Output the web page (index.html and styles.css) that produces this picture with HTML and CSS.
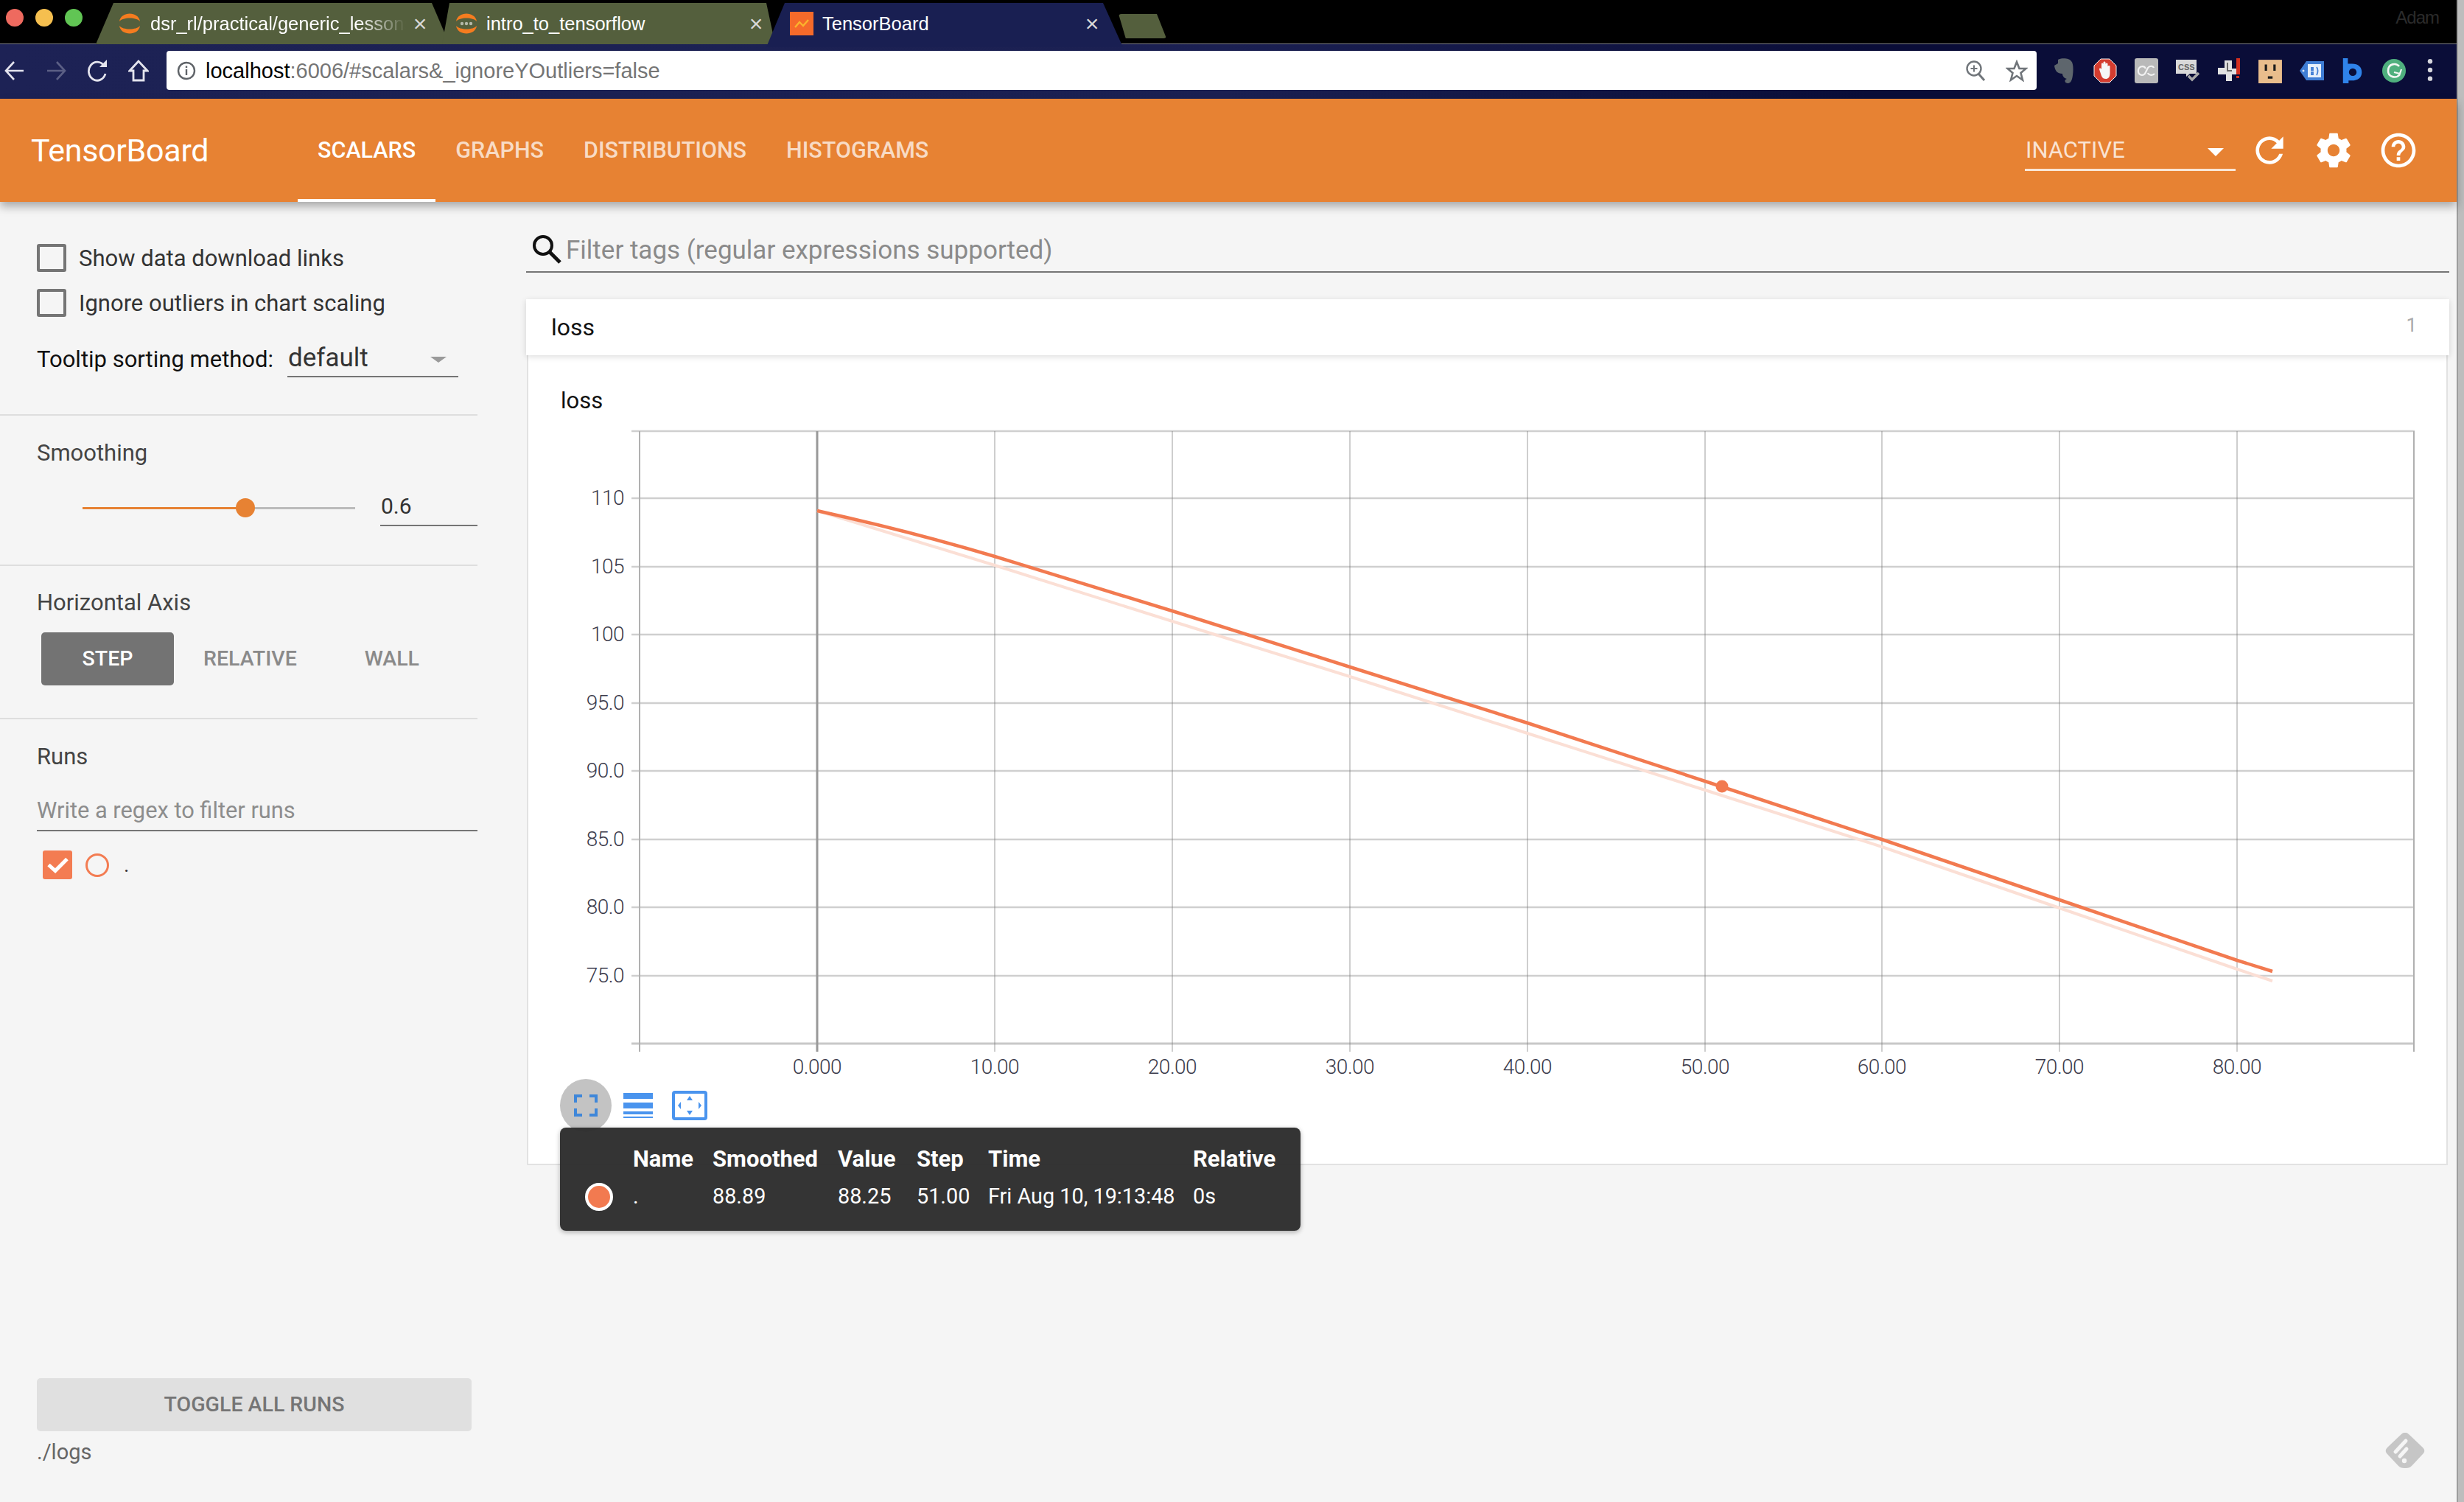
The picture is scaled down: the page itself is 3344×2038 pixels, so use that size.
FILE: index.html
```html
<!DOCTYPE html>
<html lang="en">
<head>
<meta charset="utf-8">
<title>TensorBoard</title>
<link rel="stylesheet" href="styles.css">
</head>
<body>
<div class="window">
  <div class="tabstrip">
    <div class="lights"><i class="light red"></i><i class="light yellow"></i><i class="light green"></i></div>
    <div class="tab tab-one">
      <svg class="favicon" viewBox="0 0 30 30"><path d="M1 12C3 -2 27 -2 29 12C24 6 6 6 1 12Z" fill="#f57c1f"/><path d="M1 18C3 32 27 32 29 18C24 24 6 24 1 18Z" fill="#f57c1f"/></svg>
      <span class="tab-title fade">dsr_rl/practical/generic_lessons</span>
      <span class="tab-close">×</span>
    </div>
    <div class="tab tab-two">
      <svg class="favicon" viewBox="0 0 30 30"><path d="M1 12C3 -2 27 -2 29 12C24 6 6 6 1 12Z" fill="#f57c1f"/><path d="M1 18C3 32 27 32 29 18C24 24 6 24 1 18Z" fill="#f57c1f"/><circle cx="9" cy="15" r="2.200" fill="#b4b8a8"/><circle cx="15" cy="15" r="2.200" fill="#b4b8a8"/><circle cx="21" cy="15" r="2.200" fill="#b4b8a8"/></svg>
      <span class="tab-title">intro_to_tensorflow</span>
      <span class="tab-close">×</span>
    </div>
    <div class="tab tab-three">
      <svg class="favicon" viewBox="0 0 32 32"><rect width="32" height="32" fill="#f56a2a"/><path d="M7 21L13 14L18 19L25 11" fill="none" stroke="#fbb32c" stroke-width="2.400"/></svg>
      <span class="tab-title">TensorBoard</span>
      <span class="tab-close">×</span>
    </div>
    <div class="newtab"></div>
    <span class="user">Adam</span>
  </div>

  <div class="toolbar">
    <div class="navs">
      <svg class="nav" viewBox="0 0 28 32"><path d="M26 16H3M13 4L2 16L13 28" fill="none" stroke="#e4e4ee" stroke-width="2.600"/></svg>
      <svg class="nav" viewBox="0 0 28 32"><path d="M2 16H25M15 4L26 16L15 28" fill="none" stroke="#5b5f85" stroke-width="2.600"/></svg>
      <svg class="nav" viewBox="0 0 28 32"><path d="M23 9A11.500 12.500 0 1 0 25 20" fill="none" stroke="#e4e4ee" stroke-width="2.800"/><path d="M17 11H27V1Z" fill="#e4e4ee"/></svg>
      <svg class="nav" viewBox="0 0 28 32"><path d="M14 3L2 16H7V29H21V16H26Z" fill="none" stroke="#e4e4ee" stroke-width="2.800"/></svg>
    </div>
    <div class="omnibox">
      <svg class="info" viewBox="0 0 26 26"><circle cx="13" cy="13" r="11" fill="none" stroke="#5f6368" stroke-width="2.400"/><path d="M11.800 11h2.400v8h-2.400zM11.800 6.500h2.400v2.400h-2.400z" fill="#5f6368"/></svg>
      <span class="url"><span class="host">localhost</span>:6006/#scalars&amp;_ignoreYOutliers=false</span>
      <svg class="omni-icon" viewBox="0 0 28 30"><circle cx="12" cy="12" r="9.500" fill="none" stroke="#70757a" stroke-width="2.400"/><path d="M18 19L26 28" stroke="#70757a" stroke-width="3"/><path d="M12 7.500V16.500M7.500 12H16.500" stroke="#70757a" stroke-width="2"/></svg>
      <svg class="omni-icon star" viewBox="0 0 30 30"><path d="M15 3L18.500 12H27.500L20.500 18L23 27.500L15 22L7 27.500L9.500 18L2.500 12H11.500Z" fill="none" stroke="#70757a" stroke-width="2.600"/></svg>
    </div>
    <div class="extensions">
      <span class="ext"><svg viewBox="0 0 32 34"><path d="M8 2C13 -1 24 0 26 4C29 7 29 16 28 23C27 32 24 34 21 34C17 34 16 29 20 28C16 27 14 24 14 21C8 21 4 18 3 10L8 7Z" fill="#5e666d"/></svg></span>
      <span class="ext"><svg viewBox="0 0 32 34"><path d="M10 1H22L31 10V24L22 33H10L1 24V10Z" fill="#d43c2f" stroke="#f4f4f4" stroke-width="1"/><path d="M11 24L8 15C8 13 10 13 11 15V8C11 6 13 6 13.500 8V6C13.500 4 16.500 4 16.500 6V8C17 6 19.500 6 19.500 8V11C20 9.500 22.500 9.500 22.500 11V20C22.500 26 20 28 17 28C14 28 12.500 27 11 24Z" fill="#f6f6f6"/></svg></span>
      <span class="ext"><svg viewBox="0 0 32 34"><rect width="32" height="34" rx="3" fill="#b9b9b9"/><path d="M15 14C13 10 6 10 5 16C4 22 10 25 14 21C15 19 17 15 18 13C20 10 25 10 26 13M27 21C24 24 19 23 18 20" fill="none" stroke="#f2f2f2" stroke-width="2.200"/></svg></span>
      <span class="ext"><svg viewBox="0 0 32 34"><path d="M0 2H28V21H19L14 25V21H0Z" fill="#d9d9d9"/><text x="3" y="16" class="ext-css">CSS</text><path d="M17 24L22 29L31 20" fill="none" stroke="#a8a8a8" stroke-width="3.500"/></svg></span>
      <span class="ext"><svg viewBox="0 0 32 34"><path d="M10 3H20V14H28V22H20V31H12V22H1V13H10Z" fill="#e2e2e2"/><path d="M14 6V17H20" fill="none" stroke="#666" stroke-width="2"/><path d="M26 0H31V22H26ZM26 24H30V27H26Z" fill="#d32f20"/></svg></span>
      <span class="ext"><svg viewBox="0 0 30 32"><rect y="2" width="30" height="30" fill="#e9bd8c"/><path d="M8 8H11V16H8ZM19 8H22V16H19ZM12 23H18V26H12Z" fill="#1c1c1c"/></svg></span>
      <span class="ext"><svg viewBox="0 0 34 28"><path d="M10 1H34V27H10L1 14Z" fill="#3f7dd4"/><rect x="12" y="5" width="18" height="18" fill="#e6effa"/><path d="M17 10H19V13H17ZM17 16H19V19H17ZM24 9C26 12 26 16 24 20" fill="none" stroke="#3f7dd4" stroke-width="1.800"/><circle cx="6" cy="14" r="1.500" fill="#d9e6f7"/></svg></span>
      <span class="ext"><svg viewBox="0 0 28 36"><path d="M0 0H7V8H13C22 8 27 13 27 20C27 28 21 32 13 32H8V36H0Z" fill="#2f83ea"/><circle cx="14" cy="20" r="5.500" fill="#0a0d38"/></svg></span>
      <span class="ext"><svg viewBox="0 0 34 34"><circle cx="17" cy="17" r="16" fill="#4fb07e"/><path d="M24 11C20 6 9 7 9 17C9 26 20 28 25 22" fill="none" stroke="#f2f7f4" stroke-width="2.600"/><path d="M17 19L25 21L27 15" fill="none" stroke="#f2f7f4" stroke-width="2.200"/></svg></span>
      <span class="ext ext-dots"><svg viewBox="0 0 8 32"><circle cx="4" cy="4" r="3" fill="#d5d5dc"/><circle cx="4" cy="15" r="3" fill="#d5d5dc"/><circle cx="4" cy="26" r="3" fill="#d5d5dc"/></svg></span>
    </div>
  </div>

  <header class="appbar">
    <div class="brand">TensorBoard</div>
    <nav class="apptabs">
      <span class="apptab active">SCALARS</span>
      <span class="apptab">GRAPHS</span>
      <span class="apptab">DISTRIBUTIONS</span>
      <span class="apptab">HISTOGRAMS</span>
    </nav>
    <div class="appactions">
      <div class="inactive"><span>INACTIVE</span><i class="inactive-arrow"></i></div>
      <svg class="act act-refresh" viewBox="0 0 24 24"><path d="M17.650 6.350C16.200 4.900 14.210 4 12 4c-4.420 0-7.990 3.580-7.990 8s3.570 8 7.990 8c3.730 0 6.840-2.550 7.730-6h-2.080c-.820 2.330-3.040 4-5.650 4-3.310 0-6-2.690-6-6s2.690-6 6-6c1.660 0 3.140.690 4.220 1.780L13 11h7V4l-2.350 2.350z"/></svg>
      <svg class="act" viewBox="0 0 24 24"><path d="M19.430 12.980c.040-.320.070-.640.070-.980s-.030-.660-.070-.980l2.110-1.650c.190-.150.240-.420.120-.640l-2-3.460c-.120-.220-.390-.300-.610-.220l-2.490 1c-.520-.400-1.080-.730-1.690-.980l-.380-2.650C14.460 2.180 14.250 2 14 2h-4c-.250 0-.460.180-.490.420l-.380 2.650c-.610.250-1.170.590-1.690.980l-2.490-1c-.230-.090-.490 0-.610.220l-2 3.460c-.130.220-.070.490.120.640l2.110 1.650c-.040.320-.070.650-.070.980s.030.660.070.980l-2.110 1.650c-.190.150-.240.420-.120.640l2 3.460c.120.220.390.300.610.220l2.490-1c.520.400 1.080.730 1.690.980l.380 2.650c.030.240.240.420.490.420h4c.250 0 .460-.180.490-.420l.380-2.650c.610-.250 1.170-.590 1.690-.980l2.490 1c.230.090.490 0 .610-.220l2-3.460c.120-.220.070-.490-.120-.640l-2.110-1.650zM12 15.500c-1.930 0-3.500-1.570-3.500-3.500s1.570-3.500 3.500-3.500 3.500 1.570 3.500 3.500-1.570 3.500-3.500 3.500z"/></svg>
      <svg class="act" viewBox="0 0 24 24"><path d="M11 18h2v-2h-2v2zm1-16C6.480 2 2 6.480 2 12s4.480 10 10 10 10-4.480 10-10S17.520 2 12 2zm0 18c-4.410 0-8-3.590-8-8s3.590-8 8-8 8 3.590 8 8-3.590 8-8 8zm0-14c-2.210 0-4 1.790-4 4h2c0-1.100.900-2 2-2s2 .900 2 2c0 2-3 1.750-3 5h2c0-2.250 3-2.500 3-5 0-2.210-1.790-4-4-4z"/></svg>
    </div>
  </header>

  <div class="app">
    <aside class="sidebar">
      <section class="side-section options">
        <label class="check-row"><i class="checkbox"></i><span>Show data download links</span></label>
        <label class="check-row second"><i class="checkbox"></i><span>Ignore outliers in chart scaling</span></label>
        <div class="sort-row">
          <span class="sort-label">Tooltip sorting method:</span>
          <div class="sort-select"><span>default</span><i class="sort-arrow"></i></div>
        </div>
      </section>
      <section class="side-section smoothing">
        <div class="side-title">Smoothing</div>
        <div class="slider-row">
          <div class="slider"><div class="slider-fill"></div><div class="slider-knob"></div></div>
          <div class="slider-value">0.6</div>
        </div>
      </section>
      <section class="side-section axis">
        <div class="side-title">Horizontal Axis</div>
        <div class="axis-buttons">
          <span class="axis-btn selected">STEP</span>
          <span class="axis-btn relative-btn">RELATIVE</span>
          <span class="axis-btn wall-btn">WALL</span>
        </div>
      </section>
      <section class="side-section runs">
        <div class="side-title">Runs</div>
        <div class="run-filter">Write a regex to filter runs</div>
        <div class="run-row">
          <i class="run-check"><svg viewBox="0 0 40 38"><path d="M8 19L17 27L33 11" fill="none" stroke="#fff" stroke-width="5"/></svg></i>
          <i class="run-circle"></i>
          <span class="run-name">.</span>
        </div>
      </section>
      <div class="side-footer">
        <div class="toggle-btn">TOGGLE ALL RUNS</div>
        <div class="logdir">./logs</div>
      </div>
    </aside>

    <main class="main">
      <div class="tag-filter">
        <svg class="search" viewBox="0 0 42 42"><circle cx="16" cy="16" r="12" fill="none" stroke="#111" stroke-width="4"/><path d="M25 25L39 39" stroke="#111" stroke-width="5"/></svg>
        <span class="tag-text">Filter tags (regular expressions supported)</span>
      </div>
      <div class="card-head"><span class="card-name">loss</span><span class="card-count">1</span></div>
      <div class="card-body">
        <div class="chart-title">loss</div>
        <svg class="chart" viewBox="717 570 2605 900" width="2605" height="900">
          <g class="grid-h">
            <path d="M857 585H3277M857 676H3277M857 769H3277M857 861H3277M857 954H3277M857 1046H3277M857 1139H3277M857 1231H3277M857 1324H3277"/>
          </g>
          <path class="axis-x" d="M857 1416H3277"/>
          <g class="grid-v">
            <path d="M1350 585V1427M1591 585V1427M1832 585V1427M2073 585V1427M2314 585V1427M2554 585V1427M2795 585V1427M3036 585V1427"/>
          </g>
          <path class="axis-side" d="M868 585V1427M3276 585V1427"/>
          <path class="axis-zero" d="M1109 585V1427"/>
          <path class="line-raw" d="M1109 693L1350 767L1591 843L1832 918L2073 995L2314 1072L2554 1149L2795 1232L3036 1315L3084 1331"/>
          <path class="line-smooth" d="M1109 693C1190 711 1270 731 1350 755L1591 829L1832 905L2073 981L2314 1060L2554 1139L2795 1221L3036 1303L3084 1318"/>
          <circle class="line-dot" cx="2337" cy="1067" r="8.500"/>
          <g class="y-labels">
            <text x="847" y="685">110</text><text x="847" y="778">105</text><text x="847" y="870">100</text><text x="847" y="963">95.0</text><text x="847" y="1055">90.0</text><text x="847" y="1148">85.0</text><text x="847" y="1240">80.0</text><text x="847" y="1333">75.0</text>
          </g>
          <g class="x-labels">
            <text x="1109" y="1457">0.000</text><text x="1350" y="1457">10.00</text><text x="1591" y="1457">20.00</text><text x="1832" y="1457">30.00</text><text x="2073" y="1457">40.00</text><text x="2314" y="1457">50.00</text><text x="2554" y="1457">60.00</text><text x="2795" y="1457">70.00</text><text x="3036" y="1457">80.00</text>
          </g>
        </svg>
        <div class="chart-tools">
          <span class="tool tool-active"><svg viewBox="0 0 32 30"><path d="M2 11V2H11M21 2H30V11M30 19V28H21M11 28H2V19" fill="none" stroke="#3f87d9" stroke-width="4"/></svg></span>
          <span class="tool tool-lines"><svg viewBox="0 0 40 34"><path d="M0 0H40V8H0ZM0 13H40V21H0ZM0 25H40V29H0ZM0 32H40V34H0Z" fill="#4a94ee"/></svg></span>
          <span class="tool tool-fit"><svg viewBox="0 0 48 40"><rect x="2" y="2" width="44" height="36" rx="2" fill="none" stroke="#4a94ee" stroke-width="4"/><path d="M24 7L28 13H20ZM24 33L28 27H20ZM8 20L12 15V25ZM40 20L36 15V25Z" fill="#4a94ee"/></svg></span>
        </div>
        <div class="tooltip">
          <span></span><b>Name</b><b>Smoothed</b><b>Value</b><b>Step</b><b>Time</b><b>Relative</b>
          <i class="swatch"></i><span>.</span><span>88.89</span><span>88.25</span><span>51.00</span><span>Fri Aug 10, 19:13:48</span><span>0s</span>
        </div>
      </div>
      <svg class="feedly" viewBox="0 0 54 48"><path d="M22 2C25 -1 29 -1 32 2L51 20C54 23 54 26 51 29L37 44C34 47 32 48 28 48H26C22 48 20 47 17 44L3 29C0 26 0 23 3 20Z" fill="#c6c6c6"/><path d="M14 26L28 11M20 32L29 22" stroke="#f5f5f5" stroke-width="5" stroke-linecap="round"/><circle cx="26" cy="38" r="3.200" fill="#f5f5f5"/></svg>
    </main>
  </div>
</div>
<div class="edge"></div>
</body>
</html>
```

FILE: styles.css
```css
* { box-sizing: border-box; }
html, body { margin: 0; height: 2038px; overflow: hidden; }
body { display: flex; background: #000; font-family: Roboto, "Liberation Sans", sans-serif; }
i { display: block; font-style: normal; }

.window { width: 3334px; height: 2038px; display: flex; flex-direction: column; background: #f5f5f5; }
.edge { width: 10px; height: 2038px; background: #bdbdbd; border-left: 2px solid #9d9d9d; }

/* browser tabs */
.tabstrip { height: 60px; flex: none; background: #000; display: flex; align-items: flex-end; position: relative; border-bottom: 1px solid #7d7f8a; }
.lights { width: 130px; align-self: flex-start; display: flex; gap: 16px; padding: 12px 0 0 8px; }
.light { width: 24px; height: 24px; border-radius: 50%; }
.red { background: #ee6a5f; }
.yellow { background: #f5bf4f; }
.green { background: #61c554; }
.tab { height: 56px; display: flex; align-items: center; color: #fff; font-size: 25.500px; position: relative; font-family: "Liberation Sans", sans-serif; }
.tab-one { width: 480px; margin-bottom: -1px; background: #545f3d; clip-path: polygon(24px 0, 456px 0, 100% 100%, 0 100%); padding-left: 31px; }
.tab-two { width: 452px; margin-left: -10px; margin-bottom: -1px; background: #545f3d; clip-path: polygon(10px 0, 440px 0, 100% 100%, 0 100%); padding-left: 18px; }
.tab-three { width: 484px; margin-left: -12px; margin-bottom: -5px; height: 60px; background: #191f52; clip-path: polygon(25px 0, 457px 0, 100% 100%, 0 100%); padding: 0 0 4px 32px; }
.favicon { width: 30px; height: 30px; flex: none; margin-right: 13px; }
.tab-three .favicon { width: 32px; height: 32px; margin-right: 12px; }
.tab-title { white-space: nowrap; overflow: hidden; }
.tab-one .tab-title { width: 354px; }
.tab-two .tab-title { width: 354px; margin-left: -1px; }
.tab-three .tab-title { width: 354px; }
.fade { -webkit-mask-image: linear-gradient(90deg, #000 80%, transparent 98%); mask-image: linear-gradient(90deg, #000 80%, transparent 98%); }
.tab-close { font-size: 32px; color: #d8d8d8; line-height: 1; width: 24px; text-align: center; }
.newtab { width: 65px; height: 33px; margin: 0 0 7px -6px; background: #545f3d; border-radius: 4px; clip-path: polygon(0 0, 80% 0, 100% 100%, 15% 100%); }
.user { position: absolute; right: 24px; top: 10px; font-family: "Liberation Sans", sans-serif; font-size: 24px; color: #2b2b2b; letter-spacing: -1px; }

/* browser toolbar */
.toolbar { height: 74px; flex: none; display: flex; padding-top: 9px; background: linear-gradient(90deg, #1d2255 0, #1b2052 50%, #0a0d38 76%); }
.navs { width: 226px; height: 53px; display: flex; align-items: center; padding-left: 6px; gap: 28px; }
.nav { width: 28px; height: 32px; flex: none; }
.omnibox { width: 2538px; height: 53px; background: #fff; border-radius: 4px; display: flex; align-items: center; padding: 0 12px 0 14px; }
.info { width: 26px; height: 26px; flex: none; }
.url { flex: 1; margin: 2px 0 0 13px; color: #757575; font-family: "Liberation Sans", sans-serif; font-size: 29px; white-space: nowrap; }
.host { color: #000; }
.omni-icon { width: 28px; height: 30px; flex: none; }
.star { margin-left: 27px; width: 30px; }
.extensions { display: flex; align-items: center; height: 53px; margin-left: 9px; }
.ext { width: 56px; height: 36px; display: flex; align-items: center; justify-content: center; }
.ext svg { height: 34px; width: 34px; }
.ext-dots { margin-left: -7px; }
.ext-css { font: 700 11px "Liberation Sans", sans-serif; fill: #666; }

/* tensorboard header */
.appbar { height: 140px; flex: none; background: #e78233; display: flex; align-items: center; color: #fff; padding-left: 42px; box-shadow: 0 6px 12px rgba(0, 0, 0, .32); position: relative; z-index: 2; }
.brand { font-size: 43px; width: 362px; letter-spacing: -.3px; }
.apptabs { display: flex; height: 140px; }
.apptab { padding: 0 27px; line-height: 140px; font-size: 30.500px; font-weight: 500; color: rgba(255, 255, 255, .72); height: 140px; }
.apptab.active { color: #fff; border-bottom: 4px solid #fff; }
.appactions { margin-left: auto; display: flex; align-items: center; }
.inactive { width: 286px; height: 52px; margin-right: 18px; margin-top: 4px; border-bottom: 3px solid rgba(255, 255, 255, .8); display: flex; justify-content: space-between; padding: 0 16px 0 1px; font-size: 31px; color: rgba(255, 255, 255, .78); line-height: 47px; }
.inactive-arrow { width: 0; height: 0; margin-top: 21px; border: 11px solid transparent; border-top-color: #fff; border-bottom: 0; }
.act { width: 56px; height: 56px; fill: #fff; margin-right: 32px; flex: none; }
.act:last-child { margin-right: 51px; }
.act-refresh { margin-right: 31px; }

/* app */
.app { flex: 1; display: flex; min-height: 0; }
.sidebar { width: 648px; flex: none; display: flex; flex-direction: column; height: 100%; }
.side-section { border-bottom: 2px solid #dedede; padding-left: 50px; }
.options { padding-top: 57px; height: 290px; }
.check-row { display: flex; align-items: center; height: 38px; font-size: 31px; color: #333; }
.check-row.second { margin-top: 23px; }
.checkbox { width: 40px; height: 38px; border: 4px solid #757575; border-radius: 3px; margin-right: 17px; flex: none; }
.sort-row { display: flex; margin-top: 32px; height: 50px; align-items: center; }
.sort-label { font-size: 31px; color: #111; width: 340px; flex: none; }
.sort-select { width: 232px; height: 50px; border-bottom: 2px solid #757575; display: flex; justify-content: space-between; font-size: 35px; color: #333; padding: 0 16px 0 1px; line-height: 48px; }
.sort-arrow { width: 0; height: 0; margin-top: 22px; border: 11px solid transparent; border-top: 8px solid #9a9a9a; border-bottom: 0; }
.side-title { font-size: 31px; line-height: 40px; color: #444; }
.smoothing { padding-top: 31px; height: 204px; }
.slider-row { display: flex; margin-top: 25px; height: 54px; }
.slider { width: 370px; margin: 28px 34px 0 62px; height: 3px; background: #bbb; position: relative; }
.slider-fill { width: 220px; height: 3px; background: #e78233; }
.slider-knob { position: absolute; left: 208px; top: -12px; width: 26px; height: 26px; border-radius: 50%; background: #e78233; }
.slider-value { width: 132px; height: 54px; border-bottom: 2px solid #757575; font-size: 30px; line-height: 54px; color: #333; padding-left: 1px; }
.axis { padding-top: 30px; height: 208px; }
.axis-buttons { display: flex; margin-top: 20px; margin-left: 6px; height: 72px; font-size: 28.500px; font-weight: 500; color: #8a8a8a; }
.axis-btn { line-height: 72px; text-align: center; }
.axis-btn.selected { width: 180px; background: #737373; color: #fff; border-radius: 5px; }
.relative-btn { margin-left: 40px; }
.wall-btn { margin-left: 92px; }
.runs { padding-top: 31px; border-bottom: 0; }
.run-filter { margin-top: 25px; height: 56px; border-bottom: 2px solid #757575; font-size: 30.800px; color: #8d8d8d; line-height: 56px; }
.run-row { display: flex; align-items: center; margin: 26px 0 0 8px; height: 39px; }
.run-check { width: 40px; height: 39px; background: #f37c52; border-radius: 3px; }
.run-check svg { width: 40px; height: 39px; display: block; }
.run-circle { width: 32px; height: 32px; border: 3px solid #f37c52; border-radius: 50%; margin-left: 18px; }
.run-name { margin-left: 20px; font-size: 28px; color: #333; }
.side-footer { margin-top: auto; padding: 0 8px 48px 50px; }
.toggle-btn { height: 72px; background: #e0e0e0; border-radius: 5px; text-align: center; line-height: 72px; font-size: 28.500px; font-weight: 500; color: #757575; }
.logdir { margin-top: 8px; line-height: 40px; font-size: 29px; color: #666; }

/* main */
.main { flex: 1; padding: 38px 10px 0 66px; position: relative; min-width: 0; }
.tag-filter { height: 58px; border-bottom: 2px solid #757575; display: flex; align-items: center; font-size: 35px; color: #8a8a8a; padding: 0 0 4px 7px; }
.tag-text { margin-top: 3px; }
.search { width: 42px; height: 42px; margin-right: 5px; flex: none; }
.card-head { height: 76px; margin-top: 36px; background: #fff; display: flex; justify-content: space-between; align-items: center; padding: 0 44px 0 34px; box-shadow: 0 2px 8px rgba(0, 0, 0, .14); position: relative; z-index: 1; }
.card-name { font-size: 32px; color: #111; }
.card-count { font-size: 26px; color: #aaa; margin-bottom: 6px; }
.card-body { height: 1099px; margin: 0 2px 0 1px; background: #fff; border: 2px solid #e2e2e2; border-top: 0; position: relative; padding-top: 42px; }
.chart-title { font-size: 31px; line-height: 40px; padding-left: 44px; color: #111; }
.chart { display: block; margin-top: 6px; }
.grid-h path { stroke: #cfcfcf; stroke-width: 2.500; fill: none; }
.axis-x { stroke: #c8c8c8; stroke-width: 3; fill: none; }
.grid-v path { stroke: rgba(120, 120, 120, .36); stroke-width: 2; fill: none; }
.axis-side { stroke: #b0b0b0; stroke-width: 2; fill: none; }
.axis-zero { stroke: #999; stroke-width: 3; fill: none; }
.line-raw { stroke: #fbdfd5; stroke-width: 4; fill: none; }
.line-smooth { stroke: #f27a50; stroke-width: 4.500; fill: none; }
.line-dot { fill: #f27a50; }
.y-labels text { font-size: 28px; font-weight: 300; fill: #3c3c4c; text-anchor: end; letter-spacing: -.5px; }
.x-labels text { font-size: 28px; font-weight: 300; fill: #3c3c4c; text-anchor: middle; letter-spacing: -.5px; }
.chart-tools { display: flex; align-items: center; margin: -6px 0 0 43px; height: 72px; }
.tool { display: flex; align-items: center; justify-content: center; flex: none; }
.tool-active { width: 70px; height: 72px; border-radius: 50%; background: #c3c3c3; }
.tool-active svg { width: 32px; height: 30px; }
.tool-lines { margin-left: 16px; }
.tool-lines svg { width: 40px; height: 34px; }
.tool-fit { margin-left: 26px; }
.tool-fit svg { width: 48px; height: 40px; }
.tooltip { position: absolute; left: 43px; top: 1048px; width: 1005px; height: 140px; background: rgba(45, 45, 45, .97); border-radius: 8px; color: #fff; box-shadow: 0 2px 6px rgba(0, 0, 0, .3); display: grid; grid-template-columns: 99px 108px 170px 107px 97px 278px 146px; grid-template-rows: 50px 50px; padding-top: 18px; font-size: 28.800px; line-height: 50px; z-index: 3; }
.tooltip b { font-weight: 700; font-size: 31px; }
.swatch { width: 38px; height: 38px; border-radius: 50%; background: #f27a50; border: 4px solid #fff; margin: 7px 0 0 34px; }
.feedly { position: absolute; right: 43px; bottom: 46px; width: 54px; height: 48px; }
```
